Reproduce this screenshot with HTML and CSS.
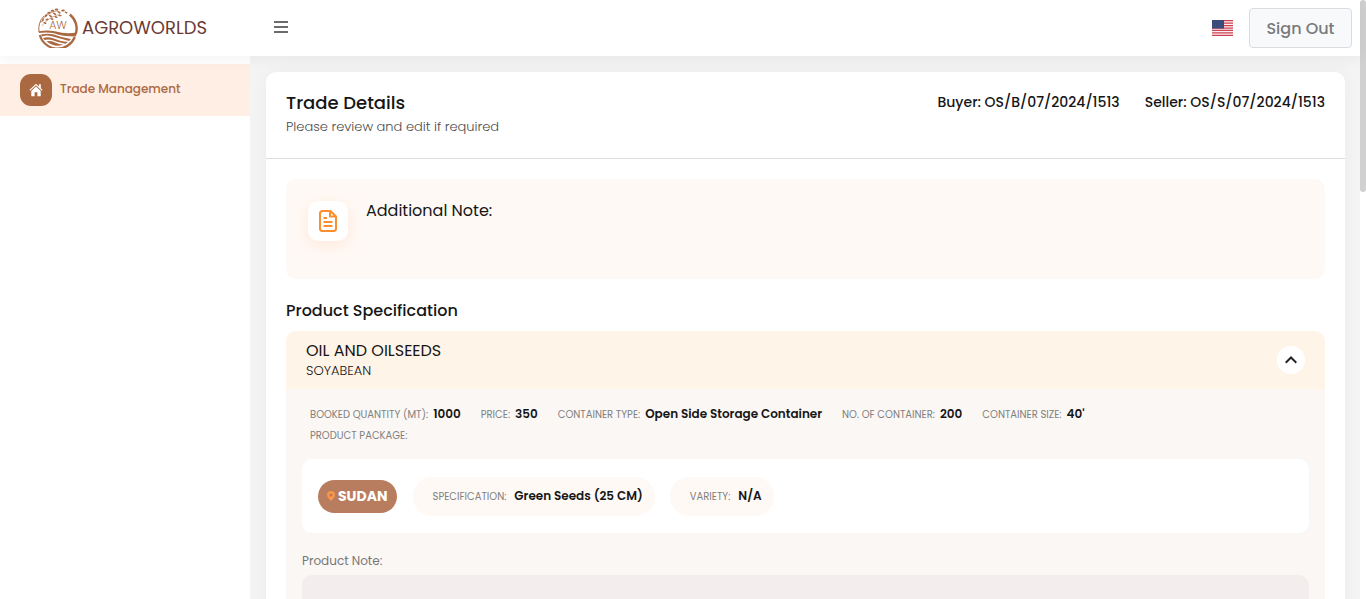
FILE: index.html
```html
<!DOCTYPE html>
<html lang="en">
<head>
<meta charset="utf-8">
<meta name="viewport" content="width=device-width, initial-scale=1">
<title>Agroworlds - Trade Details</title>
<link rel="stylesheet" href="styles.css">
</head>
<body>
<div class="app">
  <header class="topbar">
    <a class="brand" href="#">
      <svg class="brand-mark" viewBox="0 0 40 40" aria-hidden="true">
        <g fill="none" stroke="#ab6942">
          <path d="M31.800 6.500A18 18 0 0 1 37.800 26" stroke-width="2.400"/>
          <path d="M1 24A19 19 0 0 1 6 8" stroke-width="1"/>
          <path d="M2.500 15Q8 5 20 2.500" stroke-width=".6"/>
          <path d="M4 18Q9 10 22 6" stroke-width=".5"/>
          <path d="M1.800 27A18.500 18.500 0 0 0 36.800 29" stroke-width="2.200"/>
        </g>
        <g fill="#ab6942">
          <path d="M.8 23.200Q9 22 17 23.200Q28 26.500 38.600 24.500L38 28.500Q24 28.500 15 25Q8 23.800 1 25Z"/>
          <path d="M3 26.500Q9 25 15 26.300Q24 29.800 33 31L31 33Q20 30 13 28Q8 27 4 28.500Z"/>
          <path d="M5 30Q10 28.500 15 30.300Q22 33.500 30 34L27.500 35.700Q20 34.500 14 32Q10 30.800 6.500 32Z"/>
          <path d="M8.500 33.300Q13 32.500 17 34.500Q21 36.500 25.500 36.700Q16 40 8.500 33.300Z"/>
          <ellipse cx="8" cy="7.500" rx="1.900" ry="1" transform="rotate(-45 8 7.500)"/>
          <ellipse cx="11" cy="4.800" rx="1.900" ry="1" transform="rotate(-10 11 4.800)"/>
          <ellipse cx="14.500" cy="2.800" rx="1.900" ry="1" transform="rotate(-5 14.500 2.800)"/>
          <ellipse cx="18.500" cy="1.500" rx="1.900" ry=".9"/>
          <ellipse cx="12.500" cy="8" rx="1.900" ry=".9" transform="rotate(30 12.500 8)"/>
          <ellipse cx="16.500" cy="5.800" rx="1.900" ry=".9" transform="rotate(30 16.500 5.800)"/>
          <ellipse cx="21" cy="4.300" rx="1.900" ry=".9" transform="rotate(30 21 4.300)"/>
          <ellipse cx="25" cy="2.500" rx="1.900" ry=".9" transform="rotate(-10 25 2.500)"/>
          <ellipse cx="28" cy="4.500" rx="1.500" ry=".7" transform="rotate(20 28 4.500)"/>
          <ellipse cx="5" cy="12" rx="1.700" ry=".8" transform="rotate(-70 5 12)"/>
          <ellipse cx="9" cy="11.500" rx="1.700" ry=".8" transform="rotate(-20 9 11.500)"/>
          <ellipse cx="14" cy="11" rx="1.700" ry=".8" transform="rotate(20 14 11)"/>
          <ellipse cx="18" cy="9" rx="1.700" ry=".8" transform="rotate(20 18 9)"/>
          <ellipse cx="22" cy="7.500" rx="1.700" ry=".8" transform="rotate(10 22 7.500)"/>
          <ellipse cx="7" cy="15" rx="1.600" ry=".8" transform="rotate(30 7 15)"/>
        </g>
        <text class="brand-initials" x="20" y="21" text-anchor="middle">AW</text>
      </svg>
      <span class="brand-name">AGROWORLDS</span>
    </a>
    <button class="menu-toggle" type="button" aria-label="Toggle menu">
      <svg viewBox="0 0 14 12" width="14" height="12"><path d="M.5 1H13.500M.5 6H13.500M.5 11H13.500" stroke="#6c6c6c" stroke-width="2" stroke-linecap="round"/></svg>
    </button>
    <div class="actions">
      <button class="language" type="button" aria-label="English (US)">
        <svg viewBox="0 0 21 16" width="21" height="16">
          <rect width="21" height="16" fill="#fbeef0"/>
          <path d="M0 .6H21M0 3.100H21M0 5.500H21M0 8H21M0 10.400H21M0 12.900H21M0 15.300H21" stroke="#cd4451" stroke-width="1.250"/>
          <rect width="12" height="8.500" fill="#394a78"/>
          <path d="M1 1.700H11M1 4.200H11M1 6.700H11" stroke="#596b95" stroke-width=".6" stroke-dasharray=".7 1.300"/>
        </svg>
      </button>
      <button class="sign-out" type="button">Sign Out</button>
    </div>
  </header>

  <nav class="sidebar" aria-label="Main">
    <a class="nav-item" href="#">
      <span class="nav-icon">
        <svg viewBox="0 0 16 16" width="14" height="14" fill="#fff" aria-hidden="true">
          <path d="M8 .8L.4 8L1.300 8.900L8 2.600L14.700 8.900L15.600 8L13.500 6V1.500H11.300V3.900Z"/>
          <path d="M8 3.900L2.600 9V15H6.400V10.500H9.600V15H13.400V9Z"/>
        </svg>
      </span>
      <span class="nav-label">Trade Management</span>
    </a>
  </nav>

  <main class="content">
    <section class="card">
      <div class="card-header">
        <div>
          <h1 class="card-title">Trade Details</h1>
          <p class="card-subtitle">Please review and edit if required</p>
        </div>
        <div class="parties">
          <span>Buyer: OS/B/07/2024/1513</span>
          <span>Seller: OS/S/07/2024/1513</span>
        </div>
      </div>
      <div class="card-body">
        <div class="note">
          <span class="note-icon">
            <svg viewBox="0 0 24 24" width="24" height="24" fill="none" stroke="#fb8e2e" stroke-width="2" stroke-linejoin="round" aria-hidden="true">
              <path d="M14.500 2H6.500Q4 2 4 4.500V19.500Q4 22 6.500 22H17.500Q20 22 20 19.500V7.500Z"/>
              <path d="M14 2V7.500H20M7.500 9H11M7.500 13H16.500M7.500 17H16.500"/>
            </svg>
          </span>
          <h2 class="note-title">Additional Note:</h2>
        </div>

        <h2 class="section-title">Product Specification</h2>
        <article class="product">
          <header class="product-header">
            <div class="product-titles">
              <h3 class="product-group">OIL AND OILSEEDS</h3>
              <p class="product-name">SOYABEAN</p>
            </div>
            <button class="collapse" type="button" aria-label="Collapse">
              <svg viewBox="0 0 12 8" width="12" height="8" fill="none" stroke="#222" stroke-width="2"><path d="M.7 6.700L6 1.500L11.300 6.700"/></svg>
            </button>
          </header>
          <div class="product-body">
            <dl class="facts">
              <div class="fact"><dt>BOOKED QUANTITY (MT):</dt><dd>1000</dd></div>
              <div class="fact"><dt>PRICE:</dt><dd>350</dd></div>
              <div class="fact"><dt>CONTAINER TYPE:</dt><dd>Open Side Storage Container</dd></div>
              <div class="fact"><dt>NO. OF CONTAINER:</dt><dd>200</dd></div>
              <div class="fact"><dt>CONTAINER SIZE:</dt><dd>40'</dd></div>
              <div class="fact fact-wide"><dt>PRODUCT PACKAGE:</dt><dd></dd></div>
            </dl>
            <div class="origin">
              <span class="country">
                <svg viewBox="0 0 8 10" width="8" height="10" aria-hidden="true"><path fill="#f8964a" fill-rule="evenodd" d="M4 0A4 4 0 0 1 8 4Q8 6.500 4 10Q0 6.500 0 4A4 4 0 0 1 4 0ZM4 2.400A1.600 1.600 0 1 0 4 5.600A1.600 1.600 0 1 0 4 2.400Z"/></svg>
                SUDAN
              </span>
              <dl class="tags">
                <div class="tag"><dt>SPECIFICATION:</dt><dd>Green Seeds (25 CM)</dd></div>
                <div class="tag"><dt>VARIETY:</dt><dd>N/A</dd></div>
              </dl>
            </div>
            <label class="field-label" for="product-note">Product Note:</label>
            <textarea class="field" id="product-note" rows="5" readonly></textarea>
          </div>
        </article>
      </div>
    </section>
  </main>
  <div class="scroll-track"><div class="scroll-thumb"></div></div>
</div>
</body>
</html>
```
FILE: styles.css
```css
* {
  box-sizing: border-box;
}

body,
h1,
h2,
h3,
p,
dl,
dd {
  margin: 0;
}

body {
  font-family: Poppins, Inter, "Liberation Sans", sans-serif;
  font-size: 13px;
  line-height: 20px;
  color: #161616;
  background: #f4f4f4;
}

button,
textarea {
  font: inherit;
}

button {
  padding: 0;
  border: 0;
  background: none;
  cursor: pointer;
}

svg {
  display: block;
}

.app {
  display: grid;
  grid-template: 56px 1fr / 250px 1fr 6px;
  height: 100vh;
  overflow: hidden;
}

.topbar {
  grid-area: 1 / 1 / 2 / 3;
  z-index: 1;
  display: flex;
  align-items: center;
  padding-right: 8px;
  background: #fff;
  box-shadow: 0 2px 16px rgba(0, 0, 0, 0.06);
}

.brand {
  display: flex;
  align-items: center;
  gap: 4px;
  width: 250px;
  padding-left: 38px;
  text-decoration: none;
}

.brand-mark {
  width: 40px;
  height: 40px;
}

.brand-initials {
  font-size: 11px;
  font-weight: 300;
  fill: #ab6942;
}

.brand-name {
  color: #6b3a35;
  font-size: 18px;
  font-weight: 400;
}

.menu-toggle {
  padding: 8px;
  margin: 0 0 2px 16px;
}

.actions {
  display: flex;
  align-items: center;
  gap: 16px;
  margin-left: auto;
}

.sign-out {
  min-width: 103px;
  height: 40px;
  padding: 2px 16px 0;
  border: 1px solid #dadce0;
  border-radius: 4px;
  background: #f8f9fb;
  color: #7a7a7a;
  font-size: 16px;
  font-weight: 500;
}

.sidebar {
  grid-area: 2 / 1;
  padding-top: 8px;
  background: #fff;
}

.nav-item {
  display: flex;
  align-items: center;
  gap: 8px;
  height: 52px;
  padding: 0 20px;
  background: #ffeee4;
  color: #ab6942;
  text-decoration: none;
}

.nav-label {
  padding-bottom: 2px;
  font-size: 12px;
  font-weight: 500;
}

.nav-icon {
  display: grid;
  place-items: center;
  width: 32px;
  height: 32px;
  border-radius: 11px;
  background: #ab6942;
}

.content {
  grid-area: 2 / 2;
  min-height: 0;
  padding: 16px 15px 0 16px;
}

.card {
  border-radius: 10px;
  background: #fff;
  box-shadow: 0 0 20px rgba(0, 0, 0, 0.04);
}

.card-header {
  display: flex;
  justify-content: space-between;
  padding: 20px 20px 21px;
  border-bottom: 1px solid #dcdde0;
}

.card-title {
  font-size: 18px;
  font-weight: 500;
  line-height: 22px;
}

.card-subtitle {
  margin-top: 3px;
  color: #4d4d4d;
  font-weight: 300;
}

.parties {
  display: flex;
  gap: 25px;
  font-size: 14px;
  font-weight: 500;
}

.card-body {
  padding: 20px;
}

.note {
  display: flex;
  gap: 18px;
  min-height: 100px;
  padding: 22px;
  border-radius: 10px;
  background: #fff9f5;
}

.note-icon {
  display: grid;
  place-items: center;
  width: 40px;
  height: 40px;
  border-radius: 10px;
  background: #fff;
  box-shadow: 0 4px 15px rgba(255, 140, 70, 0.15);
}

.note-title {
  font-size: 16px;
  font-weight: 400;
}

.section-title {
  margin: 20px 0 8px;
  font-size: 16px;
  font-weight: 500;
  line-height: 24px;
}

.product {
  overflow: hidden;
  border-radius: 10px;
  background: #fbf7f4;
}

.product-header {
  display: flex;
  align-items: center;
  justify-content: space-between;
  height: 58px;
  padding: 0 20px;
  background: #fff4e8;
}

.product-titles {
  padding-top: 2px;
}

.product-group {
  font-size: 16px;
  font-weight: 400;
}

.product-name {
  font-size: 13px;
  font-weight: 300;
}

.collapse {
  display: grid;
  place-items: center;
  width: 28px;
  height: 28px;
  border-radius: 50%;
  background: #fff;
}

.product-body {
  padding: 15px 16px;
}

.facts {
  display: flex;
  flex-wrap: wrap;
  gap: 1px 20px;
  padding: 0 8px;
}

.fact,
.tag {
  display: flex;
  align-items: baseline;
}

.fact {
  gap: 5px;
}

.fact-wide {
  width: 100%;
}

.facts dt,
.tags dt {
  color: #808080;
  font-size: 10px;
}

.facts dd,
.tags dd {
  font-size: 12px;
  font-weight: 600;
}

.origin {
  display: flex;
  align-items: center;
  gap: 16px;
  min-height: 74px;
  margin-top: 13px;
  padding: 0 16px;
  border-radius: 10px;
  background: #fff;
}

.country {
  display: flex;
  align-items: center;
  gap: 3px;
  height: 33px;
  padding: 0 9px;
  border-radius: 17px;
  background: #b87d5e;
  color: #fff;
  font-size: 14px;
  font-weight: 700;
}

.tags {
  display: flex;
  gap: 15px;
}

.tag {
  gap: 8px;
  padding: 9px 12px 9px 20px;
  border-radius: 19px;
  background: #fff9f5;
}

.field-label {
  display: block;
  margin: 18px 0 4px;
  color: #777;
  font-size: 12px;
}

.field {
  display: block;
  width: 100%;
  padding: 12px;
  border: 0;
  border-radius: 10px;
  background: #f3eeed;
  resize: none;
}

.scroll-track {
  grid-area: 1 / 3 / 3 / 4;
  background: #fff;
}

.scroll-thumb {
  height: 32%;
  border-radius: 3px;
  background: #d0d0d0;
}
```
